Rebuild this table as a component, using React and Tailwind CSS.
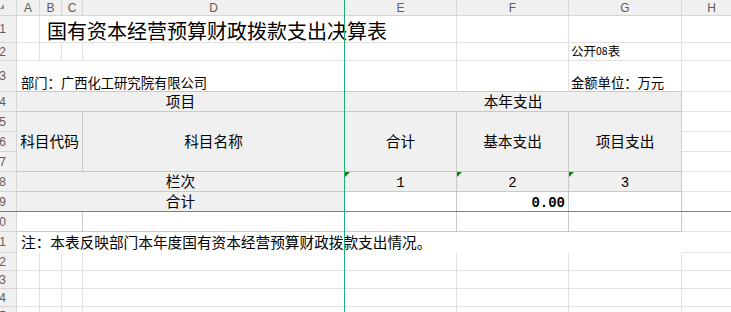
import React from "react";

// grid lines: plain sheet cells vs. bordered table cells
const LIGHT = "border-r border-b border-[#e1e1e1]";
const DARK = "border-r border-b border-[#c9c9c9]";
const GRAY = "bg-[#f0f0f0]";
const CJK = "font-['Noto_Sans_CJK_SC','Noto_Sans',sans-serif]";
const MONO = "font-['Liberation_Mono','Noto_Sans_CJK_SC',monospace]";

const LETTERS = ["A", "B", "C", "D", "E", "F", "G", "H"];
const COLS = ["col-start-2", "col-start-3", "col-start-4", "col-start-5", "col-start-6", "col-start-7", "col-start-8", "col-start-9"];
const ROWS = [
  "row-start-2", "row-start-3", "row-start-4", "row-start-5", "row-start-6",
  "row-start-7", "row-start-8", "row-start-9", "row-start-10", "row-start-11",
  "row-start-12", "row-start-13", "row-start-14", "row-start-15", "row-start-16",
];

function Cell({ className = "", children }) {
  return <div className={`relative flex min-w-0 ${className}`}>{children}</div>;
}

// little green corner mark on cells holding numbers stored as text
function TextMark() {
  return (
    <span className="absolute left-0 top-0 h-0 w-0 border-t-[5px] border-r-[5px] border-t-[#137a13] border-r-transparent" />
  );
}

export default function App() {
  return (
    <div className={`relative w-[731px] h-[312px] overflow-hidden bg-white ${CJK}`}>
      <div className="grid grid-cols-[17px_23px_22px_21px_262px_112px_112px_113px_60px] grid-rows-[16px_27px_18px_31px_20px_20px_20px_20px_20px_20px_20px_21px_18px_18px_18px_18px]">
        {/* corner */}
        <Cell className={`col-start-1 row-start-1 ${GRAY} border-r border-b border-[#d6d6d6]`}>
          <svg className="absolute left-0 top-[4px]" width="4" height="5" viewBox="0 0 4 5">
            <polygon points="4,0 4,5 0,5" fill="#8c8c8c" />
          </svg>
        </Cell>

        {/* column letters */}
        {LETTERS.map((l, i) => (
          <Cell
            key={l}
            className={`${COLS[i]} row-start-1 ${GRAY} border-r border-b border-[#d6d6d6] items-center justify-center font-['Liberation_Sans',sans-serif] text-[12px] leading-none text-[#5e5e5e]`}
          >
            {l}
          </Cell>
        ))}

        {/* row numbers */}
        {ROWS.map((r, i) => (
          <Cell
            key={r}
            className={`col-start-1 ${r} ${GRAY} border-r border-b border-[#d6d6d6] items-center justify-end overflow-hidden whitespace-nowrap pr-[10px] font-['Liberation_Sans',sans-serif] text-[12px] leading-none text-[#5e5e5e]`}
          >
            {i + 1}
          </Cell>
        ))}

        {/* row 1: title */}
        <Cell className={`col-start-2 row-start-2 ${LIGHT}`} />
        <Cell className={`col-start-3 col-span-4 row-start-2 ${LIGHT} items-center pl-[7px] pt-[3px] text-[20px] leading-none text-black`}>
          国有资本经营预算财政拨款支出决算表
        </Cell>
        <Cell className={`col-start-7 row-start-2 ${LIGHT}`} />
        <Cell className={`col-start-8 row-start-2 ${LIGHT}`} />
        <Cell className={`col-start-9 row-start-2 ${LIGHT}`} />

        {/* row 2 */}
        <Cell className={`col-start-2 row-start-3 ${LIGHT}`} />
        <Cell className={`col-start-3 row-start-3 ${LIGHT}`} />
        <Cell className={`col-start-4 row-start-3 ${LIGHT}`} />
        <Cell className={`col-start-5 row-start-3 ${LIGHT}`} />
        <Cell className={`col-start-6 row-start-3 ${LIGHT}`} />
        <Cell className={`col-start-7 row-start-3 ${LIGHT}`} />
        <Cell className={`col-start-8 row-start-3 ${LIGHT} items-center pl-[2px] text-[12.5px] leading-none text-black`}>
          公开<span className="text-[10.5px]">08</span>表
        </Cell>
        <Cell className={`col-start-9 row-start-3 ${LIGHT}`} />

        {/* row 3 */}
        <Cell className={`col-start-2 col-span-4 row-start-4 ${LIGHT} border-b-[#c9c9c9] items-end pl-[4px] pb-[2px] text-[13.3px] leading-none text-black`}>
          部门：广西化工研究院有限公司
        </Cell>
        <Cell className={`col-start-6 row-start-4 ${LIGHT} border-b-[#c9c9c9]`} />
        <Cell className={`col-start-7 row-start-4 ${LIGHT} border-b-[#c9c9c9]`} />
        <Cell className={`col-start-8 row-start-4 ${LIGHT} border-b-[#c9c9c9] items-end pl-[2px] pb-[2px] text-[13.3px] leading-none text-black`}>
          金额单位：万元
        </Cell>
        <Cell className={`col-start-9 row-start-4 ${LIGHT}`} />

        {/* row 4: header band */}
        <Cell className={`col-start-2 col-span-4 row-start-5 ${DARK} ${GRAY} items-center justify-center text-[14.67px] leading-none`}>
          项目
        </Cell>
        <Cell className={`col-start-6 col-span-3 row-start-5 ${DARK} ${GRAY} items-center justify-center text-[14.67px] leading-none`}>
          本年支出
        </Cell>
        <Cell className={`col-start-9 row-start-5 ${LIGHT}`} />

        {/* rows 5-7: column titles */}
        <Cell className={`col-start-2 col-span-3 row-start-6 row-span-3 ${DARK} ${GRAY} items-center justify-center text-[14.67px] leading-none`}>
          科目代码
        </Cell>
        <Cell className={`col-start-5 row-start-6 row-span-3 ${DARK} ${GRAY} items-center justify-center text-[14.67px] leading-none`}>
          科目名称
        </Cell>
        <Cell className={`col-start-6 row-start-6 row-span-3 ${DARK} ${GRAY} items-center justify-center text-[14.67px] leading-none`}>
          合计
        </Cell>
        <Cell className={`col-start-7 row-start-6 row-span-3 ${DARK} ${GRAY} items-center justify-center text-[14.67px] leading-none`}>
          基本支出
        </Cell>
        <Cell className={`col-start-8 row-start-6 row-span-3 ${DARK} ${GRAY} items-center justify-center text-[14.67px] leading-none`}>
          项目支出
        </Cell>
        <Cell className={`col-start-9 row-start-6 ${LIGHT}`} />
        <Cell className={`col-start-9 row-start-7 ${LIGHT}`} />
        <Cell className={`col-start-9 row-start-8 ${LIGHT}`} />

        {/* row 8: column numbers */}
        <Cell className={`col-start-2 col-span-4 row-start-9 ${DARK} ${GRAY} items-center justify-center text-[14.67px] leading-none`}>
          栏次
        </Cell>
        <Cell className={`col-start-6 row-start-9 ${DARK} ${GRAY} items-center justify-center pt-[3px] ${MONO} text-[14px] leading-none`}>
          <TextMark />1
        </Cell>
        <Cell className={`col-start-7 row-start-9 ${DARK} ${GRAY} items-center justify-center pt-[3px] ${MONO} text-[14px] leading-none`}>
          <TextMark />2
        </Cell>
        <Cell className={`col-start-8 row-start-9 ${DARK} ${GRAY} items-center justify-center pt-[3px] ${MONO} text-[14px] leading-none`}>
          <TextMark />3
        </Cell>
        <Cell className={`col-start-9 row-start-9 ${LIGHT}`} />

        {/* row 9: totals */}
        <Cell className={`col-start-2 col-span-4 row-start-10 ${DARK} ${GRAY} items-center justify-center text-[14.67px] leading-none`}>
          合计
        </Cell>
        <Cell className={`col-start-6 row-start-10 ${DARK}`} />
        <Cell className={`col-start-7 row-start-10 ${DARK} items-center justify-end pr-[3px] pt-[2px] ${MONO} text-[14px] font-bold leading-none`}>
          0.00
        </Cell>
        <Cell className={`col-start-8 row-start-10 ${DARK}`} />
        <Cell className={`col-start-9 row-start-10 ${LIGHT}`} />

        {/* row 10: empty bordered row */}
        <Cell className={`col-start-2 col-span-3 row-start-11 ${DARK}`} />
        <Cell className={`col-start-5 row-start-11 ${DARK}`} />
        <Cell className={`col-start-6 row-start-11 ${DARK}`} />
        <Cell className={`col-start-7 row-start-11 ${DARK}`} />
        <Cell className={`col-start-8 row-start-11 ${DARK}`} />
        <Cell className={`col-start-9 row-start-11 ${LIGHT}`} />

        {/* row 11: note */}
        <Cell className="col-start-2 col-span-7 row-start-12 items-center pl-[4px] text-[14.67px] leading-none text-black">
          注：本表反映部门本年度国有资本经营预算财政拨款支出情况。
        </Cell>
        <Cell className="col-start-9 row-start-12 border-b border-[#e1e1e1]" />

        {/* rows 12-15: blank sheet */}
        {ROWS.slice(11).map((r) =>
          COLS.map((c) => <Cell key={r + c} className={`${c} ${r} ${LIGHT}`} />)
        )}
      </div>

      {/* frozen pane dividers */}
      <div className="pointer-events-none absolute left-[344px] top-0 z-10 h-full w-0 border-l border-[#1fb07a]" />
      <div className="pointer-events-none absolute left-0 top-[211px] z-10 h-0 w-full border-t border-[#1fb07a]" />
    </div>
  );
}
